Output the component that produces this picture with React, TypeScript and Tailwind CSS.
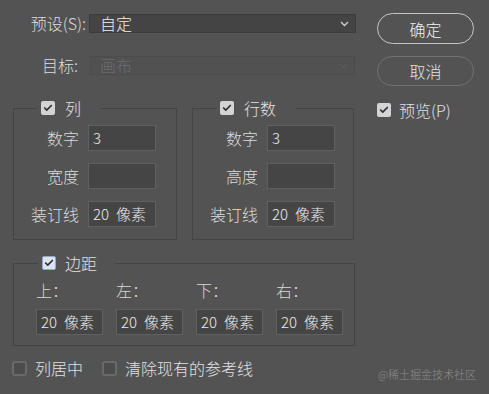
import { Check } from 'lucide-react';

const font = { fontFamily: '"Noto Sans CJK SC", "Noto Sans", sans-serif' };

function CheckBox({ checked, focused }: { checked?: boolean; focused?: boolean }) {
  if (checked) {
    return (
      <span
        className={`flex h-[14px] w-[14px] shrink-0 items-center justify-center rounded-[2px] bg-[#d4d4d4] ${
          focused ? 'border border-[#8fa9d6] bg-[#dde3ec]' : ''
        }`}
      >
        <Check className="h-[10px] w-[10px] text-[#2f2f2f]" strokeWidth={4} />
      </span>
    );
  }
  return <span className="block h-[15px] w-[15px] shrink-0 rounded-[3px] border-2 border-[#696969] bg-[#4c4c4c]" />;
}

function Chevron({ disabled }: { disabled?: boolean }) {
  return (
    <svg width="9" height="6" viewBox="0 0 9 6" className="mr-[6px]">
      <path
        d="M1 1l3.5 3.5L8 1"
        fill="none"
        stroke={disabled ? '#5c5c5c' : '#cfcfcf'}
        strokeWidth="1.3"
      />
    </svg>
  );
}

function Px({ w = 'w-[68px]', value }: { w?: string; value?: string }) {
  return (
    <div className={`flex h-[26px] ${w} items-center border border-[#606060] bg-[#454545] pl-[4px] text-[15px] text-[#ececec]`}>
      {value === '20' ? (
        <>
          <span>20</span>
          <span className="ml-[7px]">像素</span>
        </>
      ) : (
        value
      )}
    </div>
  );
}

function Group({
  title,
  rows,
  className,
}: {
  title: string;
  rows: { label: string; value?: string }[];
  className: string;
}) {
  return (
    <fieldset className={`border border-[#444444] ${className}`}>
      <legend className="ml-[23px] flex h-[20px] items-center gap-[10px] pl-[4px] pr-[20px]">
        <CheckBox checked />
        <span className="text-[16px] leading-[20px] text-[#e2e2e2]">{title}</span>
      </legend>
      <div className="flex flex-col gap-[12px] pt-[7px] pb-[12px]">
        {rows.map((r) => (
          <div key={r.label} className="flex items-center gap-[9px]">
            <span className="w-[65px] text-right text-[16px] leading-[20px] text-[#dcdcdc]">{r.label}</span>
            <Px value={r.value} />
          </div>
        ))}
      </div>
    </fieldset>
  );
}

export default function App() {
  const margins = ['上：', '左：', '下：', '右：'];

  return (
    <div className="relative h-[394px] w-[489px] overflow-hidden bg-[#535353] font-light" style={font}>
      <div className="flex pt-[13px]">
        {/* 左侧 */}
        <div className="w-[356px]">
          <div className="mt-[1px] flex items-center">
            <span className="w-[86px] text-right text-[16px] leading-[19px] text-[#dedede]">预设(S):</span>
            <div className="ml-[3px] flex h-[19px] flex-1 items-center justify-between border border-[#3c3c3c] bg-[#444444] pl-[10px]">
              <span className="text-[16px] leading-[17px] text-[#f0f0f0]">自定</span>
              <Chevron />
            </div>
          </div>

          <div className="mt-[23px] flex items-center">
            <span className="w-[78px] text-right text-[16px] leading-[19px] text-[#dedede]">目标:</span>
            <div className="ml-[12px] mr-[1px] flex h-[19px] flex-1 items-center justify-between border border-[#4c4c4c] bg-[#515151] pl-[9px]">
              <span className="text-[16px] leading-[17px] text-[#6c6c6c]">画布</span>
              <Chevron disabled />
            </div>
          </div>

          <div className="mt-[23px] flex">
            <Group
              title="列"
              className="ml-[13px] w-[164px]"
              rows={[
                { label: '数字', value: '3' },
                { label: '宽度' },
                { label: '装订线', value: '20' },
              ]}
            />
            <Group
              title="行数"
              className="ml-[15px] w-[162px]"
              rows={[
                { label: '数字', value: '3' },
                { label: '高度' },
                { label: '装订线', value: '20' },
              ]}
            />
          </div>

          <fieldset className="ml-[13px] mt-[13px] w-[342px] border border-[#444444]">
            <legend className="ml-[24px] flex h-[20px] items-center gap-[9px] pl-[4px] pr-[18px]">
              <CheckBox checked focused />
              <span className="text-[16px] leading-[20px] text-[#e2e2e2]">边距</span>
            </legend>
            <div className="grid grid-cols-4 gap-x-[13px] gap-y-[11px] pl-[22px] pr-[11px] pt-[9px] pb-[10px]">
              {margins.map((m) => (
                <span key={m} className="text-[16px] leading-[16px] text-[#d8d8d8]">
                  {m}
                </span>
              ))}
              {margins.map((m) => (
                <Px key={m + 'v'} w="w-[67px]" value="20" />
              ))}
            </div>
          </fieldset>
        </div>

        {/* 右侧按钮 */}
        <div className="ml-[21px] flex w-[97px] flex-col">
          <button className="h-[31px] rounded-full border-[1.5px] border-[#c4c4c4] text-[16px] text-[#f2f2f2]">
            确定
          </button>
          <button className="mt-[12px] h-[30px] rounded-full border-[1.5px] border-[#727272] text-[16px] text-[#e4e4e4]">
            取消
          </button>
          <div className="mt-[16px] flex items-center gap-[8px]">
            <CheckBox checked />
            <span className="text-[16px] leading-[16px] text-[#e2e2e2]">预览(P)</span>
          </div>
        </div>
      </div>

      <div className="ml-[12px] mt-[13px] flex items-center">
        <CheckBox />
        <span className="ml-[8px] text-[16px] leading-[18px] text-[#e2e2e2]">列居中</span>
        <span className="ml-[19px] flex">
          <CheckBox />
        </span>
        <span className="ml-[8px] text-[16px] leading-[18px] text-[#e2e2e2]">清除现有的参考线</span>
      </div>

      <span className="absolute bottom-[13px] right-[13px] text-[11px] leading-[14px] text-[#8c8c8c]">
        @稀土掘金技术社区
      </span>
    </div>
  );
}
